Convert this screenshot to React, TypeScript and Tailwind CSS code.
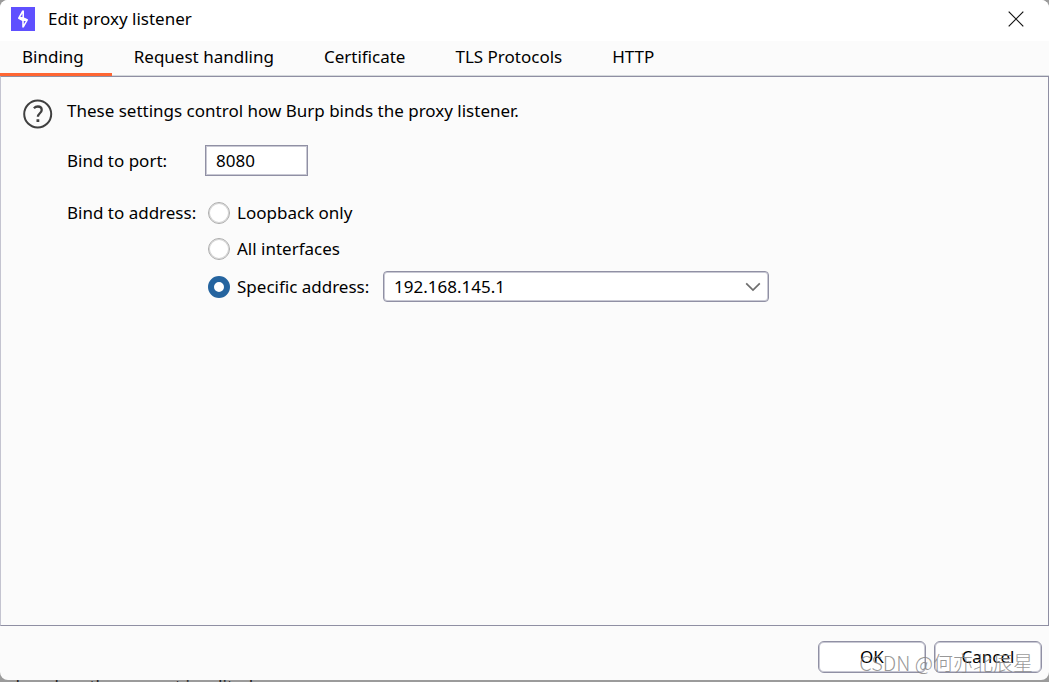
import { useState } from "react";

const tabs = ["Binding", "Request handling", "Certificate", "TLS Protocols", "HTTP"];

const radioClass =
  "m-0 h-[22px] w-[22px] shrink-0 appearance-none rounded-full border border-[#acacac] bg-white shadow-[inset_0_0_0_1px_#d6d6d6] checked:border-[6px] checked:border-[#25649f] checked:shadow-none";

const buttonClass =
  "h-8 w-[108px] rounded-md border border-[#9090a4] bg-white shadow-[inset_0_0_0_1px_#c9c9d4]";

function BurpLogo() {
  return (
    <svg width="24" height="24" viewBox="0 0 24 24" aria-hidden="true" className="shrink-0">
      <rect width="24" height="24" fill="#5f50ff" />
      <path
        d="M11.2 3.6 H13 V10.4 L16.9 12.3 V13.3 L12.8 20.4 H11.2 V13.9 L7.1 11.7 V10.7 Z M11.4 6.6 L9.4 10 H11.4 Z M12.8 13.9 V17.2 L14.8 13.9 Z"
        fill="#fff"
        fillRule="evenodd"
      />
    </svg>
  );
}

function HelpIcon() {
  return (
    <svg width="30" height="30" viewBox="0 0 30 30" fill="none" stroke="#404040" aria-hidden="true">
      <circle cx="14.7" cy="15" r="13.5" strokeWidth="2" />
      <path d="M10.9 9.2 C12 8 13.4 7.5 14.9 7.5 C17.3 7.5 18.7 8.9 18.7 10.9 C18.7 14.2 14.9 14.3 14.9 17.8" strokeWidth="2.3" />
      <path d="M14.9 20.2 V23" strokeWidth="2.8" />
    </svg>
  );
}

export default function App() {
  const [tab, setTab] = useState("Binding");
  const [port, setPort] = useState("8080");
  const [bind, setBind] = useState("specific");

  return (
    <div className="flex h-screen flex-col bg-[#9b9b9b] font-['Noto_Sans','Noto_Sans_CJK_SC',sans-serif] text-[17px] leading-6 text-black">
      <main className="relative flex min-h-0 flex-1 flex-col overflow-hidden rounded-lg bg-[#fbfbfb]">
        <header className="flex h-[41px] shrink-0 items-center gap-[13px] bg-white pb-[3px] pl-[11px] pr-[25px]">
          <BurpLogo />
          <h1 className="flex-1">Edit proxy listener</h1>
          <button type="button" aria-label="Close">
            <svg width="16" height="16" viewBox="0 0 16 16" fill="none" stroke="#111" strokeWidth="1.2" aria-hidden="true">
              <path d="M0.7 0.7 L15.3 15.3 M15.3 0.7 L0.7 15.3" />
            </svg>
          </button>
        </header>

        <nav role="tablist" className="flex h-[35px] shrink-0 border-b border-[#d5d9dc]">
          {tabs.map((name) => (
            <button
              key={name}
              type="button"
              role="tab"
              aria-selected={tab === name}
              onClick={() => setTab(name)}
              className={
                "-mb-px border-b-[3px] pl-[22px] pr-7 " +
                (tab === name ? "border-[#ff6633]" : "border-transparent")
              }
            >
              {name}
            </button>
          ))}
        </nav>

        <section className="flex flex-1 items-start gap-[14px] border border-[#8f8fa3] border-l-[#c4c4d0] pl-[22px] pt-[22px]">
          <HelpIcon />
          <div>
            <p>These settings control how Burp binds the proxy listener.</p>
            <div className="mt-[22px] flex items-center">
              <label htmlFor="port" className="w-[138px]">Bind to port:</label>
              <input
                id="port"
                value={port}
                onChange={(e) => setPort(e.target.value)}
                className="h-[31px] w-[103px] border border-[#9090a4] bg-white px-[10px] shadow-[inset_0_0_0_1px_#c9c9d4] outline-none"
              />
            </div>
            <fieldset className="mt-[25px] flex items-start">
              <div id="address-label" className="w-[141px]">Bind to address:</div>
              <div role="radiogroup" aria-labelledby="address-label" className="flex flex-col gap-3">
                <label className="flex items-center gap-[7px]">
                  <input type="radio" name="bind" className={radioClass} checked={bind === "loopback"} onChange={() => setBind("loopback")} />
                  Loopback only
                </label>
                <label className="flex items-center gap-[7px]">
                  <input type="radio" name="bind" className={radioClass} checked={bind === "all"} onChange={() => setBind("all")} />
                  All interfaces
                </label>
                <div className="-mt-[2px] flex items-center">
                  <label className="flex w-[175px] items-center gap-[7px]">
                    <input type="radio" name="bind" className={radioClass} checked={bind === "specific"} onChange={() => setBind("specific")} />
                    Specific address:
                  </label>
                  <div className="grid items-center">
                    <select
                      aria-label="Specific address"
                      className="col-start-1 row-start-1 h-[31px] w-[386px] appearance-none rounded border border-[#9090a4] bg-white px-[10px] shadow-[inset_0_0_0_1px_#c9c9d4] outline-none"
                    >
                      <option>192.168.145.1</option>
                    </select>
                    <svg width="16" height="10" viewBox="0 0 16 10" fill="none" stroke="#6e6e6e" strokeWidth="1.7" aria-hidden="true" className="pointer-events-none col-start-1 row-start-1 mr-2 justify-self-end">
                      <path d="M1.2 1.3 L8 8 L14.8 1.3" />
                    </svg>
                  </div>
                </div>
              </div>
            </fieldset>
          </div>
        </section>

        <footer className="flex shrink-0 justify-end gap-2 pb-[7px] pr-[7px] pt-[15px]">
          <button type="button" className={buttonClass}>OK</button>
          <button type="button" className={buttonClass}>Cancel</button>
        </footer>
        <span className="pointer-events-none absolute bottom-[5px] right-4 font-['Noto_Sans_CJK_SC',sans-serif] text-[20px] font-light leading-6 text-[#858585]/85">
          CSDN @何亦北辰星
        </span>
      </main>
      <div className="h-[2px] shrink-0 overflow-hidden whitespace-nowrap leading-3 text-[#222]" aria-hidden="true">
        ader when the request is edited
      </div>
    </div>
  );
}
